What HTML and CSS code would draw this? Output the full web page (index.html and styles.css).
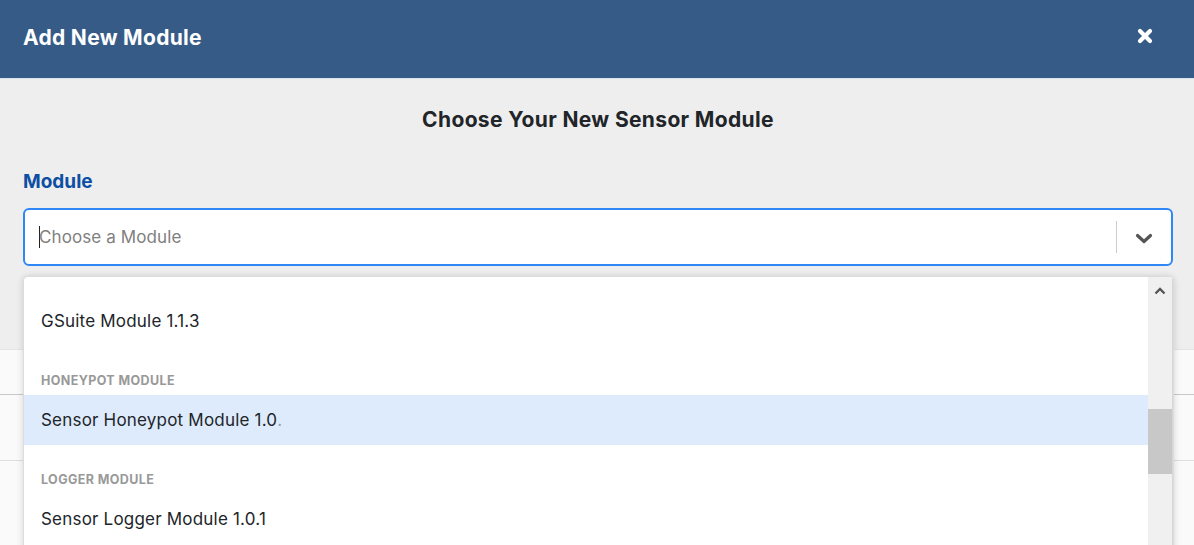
FILE: index.html
```html
<!DOCTYPE html>
<html lang="en">
<head>
<meta charset="utf-8">
<title>Add New Module</title>
<link rel="stylesheet" href="styles.css">
</head>
<body>
<div class="modal">
  <header class="modal-header">
    <h1 class="modal-title">Add New Module</h1>
    <button class="close-btn" aria-label="Close">
      <svg width="16" height="16" viewBox="0 0 16 16"><path d="M3 3 L13 13 M13 3 L3 13" stroke="#fff" stroke-width="4.2" stroke-linecap="round"/></svg>
    </button>
  </header>
  <section class="modal-body">
    <h2 class="section-title">Choose Your New Sensor Module</h2>
    <label class="field-label">Module</label>
    <div class="select-wrap">
      <div class="select-control">
        <div class="select-value"><span class="caret"></span><span class="placeholder">Choose a Module</span></div>
        <div class="select-indicators">
          <span class="indicator-sep"></span>
          <span class="indicator">
            <svg width="18" height="11" viewBox="0 0 18 11"><path d="M2.5 2.5 L9 8.5 L15.5 2.5" fill="none" stroke="#555" stroke-width="3.2" stroke-linecap="round" stroke-linejoin="round"/></svg>
          </span>
        </div>
      </div>
      <div class="select-menu">
        <div class="menu-list">
          <div class="option">GSuite Module 1.1.3</div>
          <div class="group-heading">Honeypot Module</div>
          <div class="option focused">Sensor Honeypot Module 1.0<span class="fade">.</span></div>
          <div class="group-heading">Logger Module</div>
          <div class="option">Sensor Logger Module 1.0.1</div>
        </div>
        <div class="scrollbar">
          <span class="scroll-up">
            <svg width="12" height="8" viewBox="0 0 12 8"><path d="M1.5 6.5 L6 2 L10.5 6.5" fill="none" stroke="#555" stroke-width="2.4"/></svg>
          </span>
          <span class="scroll-thumb"></span>
        </div>
      </div>
    </div>
  </section>
  <section class="backdrop-rows">
    <div class="bg-row first"></div>
    <div class="bg-row second"></div>
    <div class="bg-row third"></div>
  </section>
</div>
</body>
</html>
```

FILE: styles.css
```css
* { box-sizing: border-box; }
html, body { margin: 0; padding: 0; }
body {
  width: 1194px;
  height: 545px;
  overflow: hidden;
  background: #ffffff;
  font-family: Inter, "Noto Sans", "Liberation Sans", sans-serif;
  color: #212529;
}
.modal { display: flex; flex-direction: column; height: 545px; overflow: hidden; }
.modal-header {
  height: 79px;
  flex: none;
  background: #365b87;
  border-bottom: 1px solid #d9e2ea;
  display: flex;
  align-items: center;
  justify-content: space-between;
  padding: 0 41px 0 23px;
}
.modal-title {
  margin: 0;
  color: #ffffff;
  font-size: 21px;
  font-weight: 700;
  letter-spacing: 0.3px;
  padding-bottom: 3px;
}
.close-btn {
  border: 0;
  background: none;
  padding: 0;
  width: 16px;
  height: 16px;
  display: flex;
  margin-bottom: 7px;
}
.modal-body {
  height: 270px;
  flex: none;
  background: #eeeeee;
  padding: 0 21px 0 23px;
  display: flex;
  flex-direction: column;
}
.section-title {
  margin: 0;
  padding-top: 28px;
  height: 82px;
  text-align: center;
  font-size: 21px;
  font-weight: 700;
  letter-spacing: 0.35px;
  color: #212529;
  line-height: 26px;
}
.field-label {
  display: block;
  color: #0d4fa3;
  font-size: 19px;
  font-weight: 700;
  line-height: 24px;
  margin-top: 9px;
  height: 38px;
}
.select-wrap { position: relative; }
.select-control {
  height: 58px;
  background: #ffffff;
  border: 2px solid #2f86f6;
  border-radius: 6px;
  display: flex;
  align-items: center;
  justify-content: space-between;
}
.select-value {
  display: flex;
  align-items: center;
  padding-left: 14px;
}
.caret {
  width: 1px;
  height: 22px;
  background: #222;
  margin-right: -1px;
}
.placeholder {
  color: #808080;
  font-size: 17px;
  letter-spacing: 0.1px;
}
.select-indicators { display: flex; align-items: center; height: 100%; }
.indicator-sep {
  width: 1px;
  height: 32px;
  background: #cccccc;
}
.indicator {
  width: 54px;
  display: flex;
  justify-content: center;
  align-items: center;
  padding-top: 2px;
}
.select-menu {
  position: absolute;
  left: 0;
  top: 68px;
  width: 1151px;
  height: 300px;
  background: #ffffff;
  border: 1px solid #dcdcdc;
  border-bottom: 0;
  border-radius: 5px 5px 0 0;
  box-shadow: 0 0 6px rgba(0,0,0,0.10), 0 2px 10px rgba(0,0,0,0.06);
  display: flex;
  overflow: hidden;
}
.menu-list {
  flex: 1;
  padding-top: 19px;
}
.option {
  height: 50px;
  display: flex;
  align-items: center;
  padding-left: 17px;
  font-size: 17px;
  letter-spacing: 0.2px;
  color: #212529;
}
.option.focused { background: #deebfd; }
.fade { color: #9aa0a6; }
.group-heading {
  height: 49px;
  padding: 28px 0 0 17px;
  font-size: 12.5px;
  font-weight: 700;
  text-transform: uppercase;
  letter-spacing: 0.4px;
  color: #999999;
  line-height: 14px;
}
.scrollbar {
  width: 25px;
  background: #f0f0f0;
  border-right: 1px solid #d6d6d6;
  position: relative;
}
.scroll-up {
  position: absolute;
  top: 10px;
  left: 6px;
  display: flex;
}
.scroll-thumb {
  position: absolute;
  left: 0;
  top: 132px;
  width: 24px;
  height: 65px;
  background: #c8c8c8;
}
.backdrop-rows { display: flex; flex-direction: column; }
.bg-row { background: #fafafa; }
.bg-row.first { height: 46px; border-bottom: 1px solid #c8c8c8; border-top: 1px solid #e4e4e4; }
.bg-row.second { height: 66px; border-bottom: 1px solid #dedede; }
.bg-row.third { height: 100px; }
```
